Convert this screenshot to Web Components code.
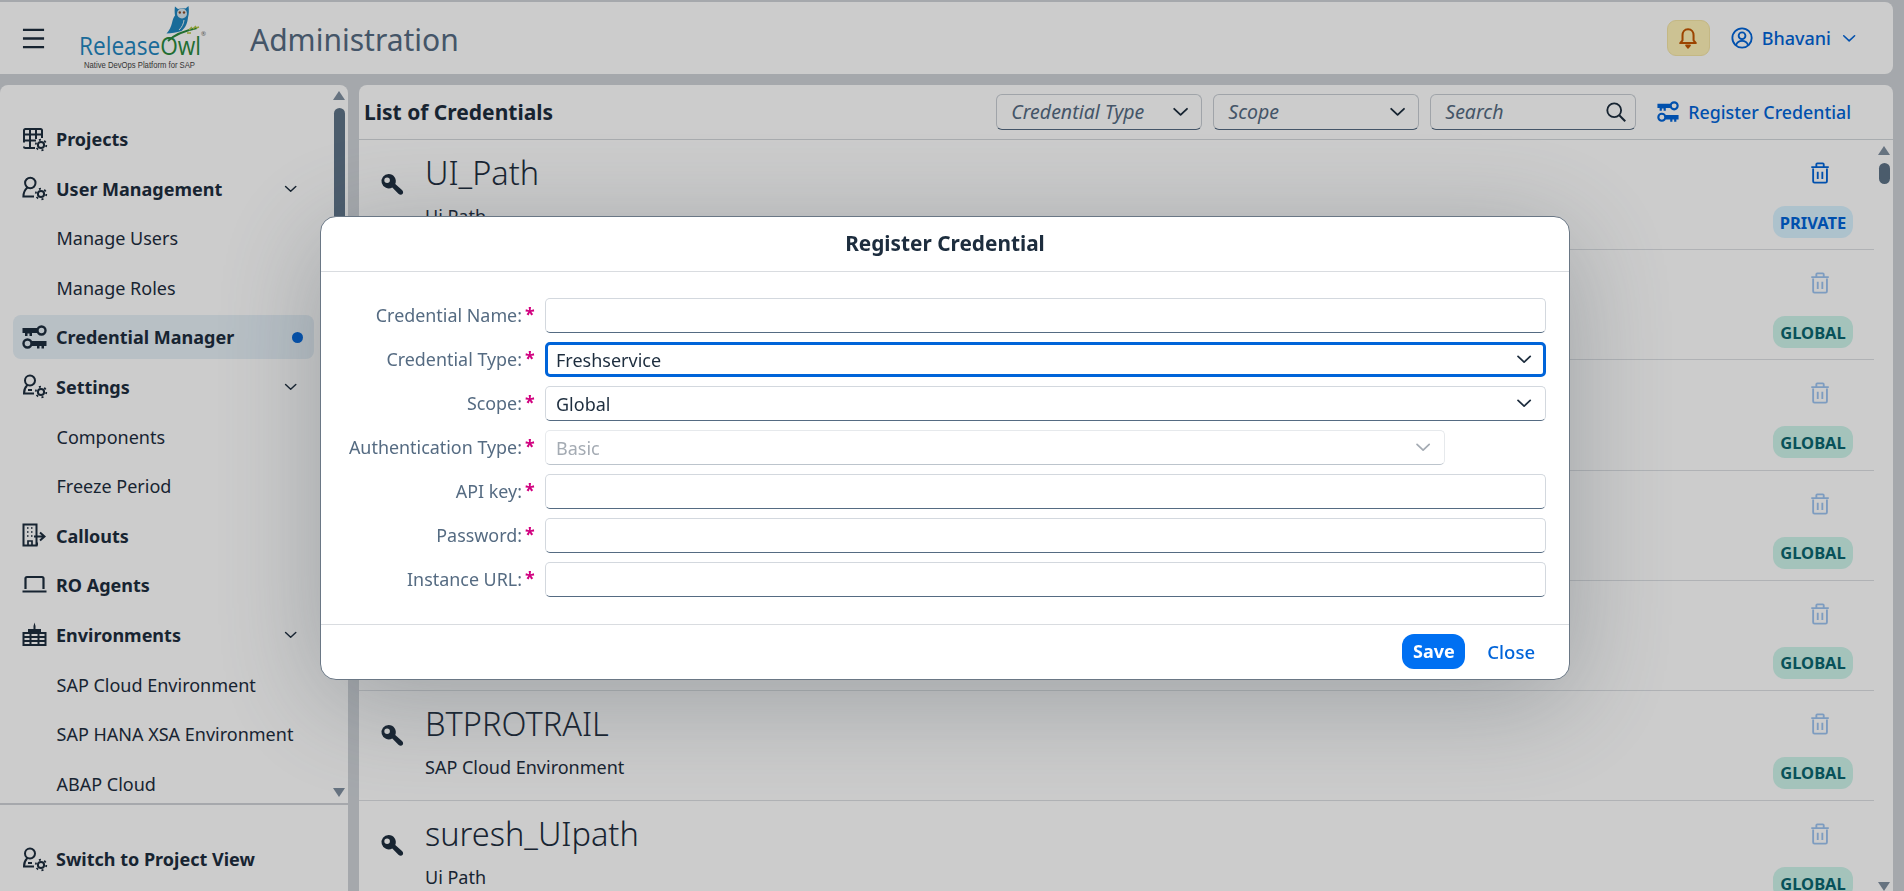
<!DOCTYPE html>
<html>
<head>
<meta charset="utf-8">
<title>Administration</title>
<style>
    html, body { margin: 0; height: 100%; overflow: hidden; }
    body { background: #cfd3d8; font-family: "Noto Sans", "Open Sans", sans-serif; color: #1d2d3e; }
</style>
</head>
<body>
<ro-shell>
    <ro-header slot="header" title="Administration" user="Bhavani"></ro-header>
    <ro-sidenav slot="nav"></ro-sidenav>
    <ro-credentials slot="main">
        <ro-cred-row name="UI_Path" type="Ui Path" scope="PRIVATE"></ro-cred-row>
        <ro-cred-row scope="GLOBAL" faded></ro-cred-row>
        <ro-cred-row scope="GLOBAL" faded></ro-cred-row>
        <ro-cred-row scope="GLOBAL" faded></ro-cred-row>
        <ro-cred-row scope="GLOBAL" faded></ro-cred-row>
        <ro-cred-row name="BTPROTRAIL" type="SAP Cloud Environment" scope="GLOBAL" faded></ro-cred-row>
        <ro-cred-row name="suresh_UIpath" type="Ui Path" scope="GLOBAL" faded></ro-cred-row>
    </ro-credentials>
</ro-shell>
<ro-dialog heading="Register Credential">
    <ro-field label="Credential Name:"></ro-field>
    <ro-field label="Credential Type:" value="Freshservice" select focused></ro-field>
    <ro-field label="Scope:" value="Global" select></ro-field>
    <ro-field label="Authentication Type:" value="Basic" select disabled></ro-field>
    <ro-field label="API key:"></ro-field>
    <ro-field label="Password:"></ro-field>
    <ro-field label="Instance URL:"></ro-field>
</ro-dialog>

<script>
const gear = (x, y) => `
    <circle cx="${x}" cy="${y}" r="3.1" fill="none" stroke="currentColor" stroke-width="2"/>
    <circle cx="${x}" cy="${y}" r="5.3" fill="none" stroke="currentColor" stroke-width="1.7" stroke-dasharray="2.1 3.45"/>`;

const ICONS = {
    projects: `<path d="M2 15.5V3.5A1.5 1.5 0 0 1 3.5 2h15A1.5 1.5 0 0 1 20 3.5V11M2 7.5h18M8 2v19M14 2v10M2 13.5h12M2 19.5A1.5 1.5 0 0 0 3.5 21H13" fill="none" stroke="currentColor" stroke-width="2"/>${gear(19, 18)}`,
    user: `<path d="M13.5 7a5.2 5.2 0 1 1-10.4 0a5.2 5.2 0 0 1 10.4 0ZM5 12c-2.3 2-3.5 5-3.6 8.5H12" fill="none" stroke="currentColor" stroke-width="2"/>${gear(19, 18)}`,
    settings: `<path d="M13 6.5a5 5 0 1 1-10 0a5 5 0 0 1 10 0ZM5 11.5c-2 2-3 4.500-3 8h10M6 16h4" fill="none" stroke="currentColor" stroke-width="2"/>${gear(19, 18)}`,
    keys: `<circle cx="19.500" cy="5.500" r="4" fill="none" stroke="currentColor" stroke-width="2.400"/><path d="M.5 3h14.500v5H10v3H7.500V8.500H5.500V11H3V8H.5Z" fill="currentColor"/><circle cx="5.500" cy="18.500" r="4" fill="none" stroke="currentColor" stroke-width="2.400"/><path d="M10 16h14.500v5H22v2.500h-2.500V21h-2v2.500H15V21h-5Z" fill="currentColor"/>`,
    callouts: `<path d="M1.500 1.500h13v21h-13ZM15 10h-1M15 19.500v3" fill="none" stroke="currentColor" stroke-width="2"/><path d="M5 5h1.500M9 5h1.500M5 9h1.500M9 9h1.500M5 13h1.500M9 13h1.500M6 22v-4h4v4" fill="none" stroke="currentColor" stroke-width="1.700"/><path d="M12 13.500h10M18 9.500l4.500 4-4.500 4" fill="none" stroke="currentColor" stroke-width="2"/>`,
    laptop: `<path d="M3.500 16V5.500A1.500 1.500 0 0 1 5 4h15a1.500 1.500 0 0 1 1.500 1.500V16M.5 18.500h24" fill="none" stroke="currentColor" stroke-width="2.200"/>`,
    env: `<path d="M1.500 11h22v12h-22ZM1.500 15h22M1.500 19h22M8.500 11v12M16.500 11v12" fill="none" stroke="currentColor" stroke-width="2"/><path d="M6 11V7h13v4ZM12.500 0.500l1 3.500v3h-2V4Z" fill="currentColor"/>`,
    chevron: `<path d="M4 8.500l8 7.500 8-7.500" fill="none" stroke="currentColor" stroke-width="2.300" stroke-linecap="round" stroke-linejoin="round"/>`,
    key: `<path fill-rule="evenodd" d="M9 1a7.500 7.500 0 0 1 6.900 10.400l7 6.300c1.500 1.400 1.500 3.200.5 4.300s-2.800 1-4.200-.4l-6.400-6.600A7.500 7.500 0 1 1 9 1Zm-1.600 3.600a2.900 2.900 0 1 0 0 5.800a2.900 2.900 0 0 0 0-5.800Z" fill="currentColor"/>`,
    trash: `<path d="M3.500 7v14A1.500 1.500 0 0 0 5 22.500h12a1.500 1.500 0 0 0 1.500-1.500V7M1.500 5.500h19M7 5V2.500A1 1 0 0 1 8 1.500h6a1 1 0 0 1 1 1V5M8.500 10.500v8M13.500 10.500v8" transform="translate(1 0)" fill="none" stroke="currentColor" stroke-width="2"/>`,
    search: `<circle cx="10" cy="10" r="7.500" fill="none" stroke="currentColor" stroke-width="2"/><path d="M15.500 15.500l6.500 6.500" fill="none" stroke="currentColor" stroke-width="2.200"/>`,
    bell: `<path d="M12 2.500c-4 0-6 3-6 6.500v5.500l-2.500 3h17l-2.500-3V9c0-3.500-2-6.500-6-6.500ZM10 20h4l-2 2.500Z" fill="none" stroke="currentColor" stroke-width="2.200" stroke-linejoin="round"/>`,
    account: `<circle cx="12" cy="12" r="10.500" fill="none" stroke="currentColor" stroke-width="2"/><circle cx="12" cy="9.500" r="3.700" fill="none" stroke="currentColor" stroke-width="2"/><path d="M5.500 19.500c1-3 3-4.500 6.500-4.500s5.500 1.500 6.500 4.500" fill="none" stroke="currentColor" stroke-width="2"/>`,
    menu: `<path d="M1 3h22M1 12h22M1 21h22" fill="none" stroke="currentColor" stroke-width="2.400"/>`
};

customElements.define('ro-icon', class extends HTMLElement {
    connectedCallback() {
        const size = this.getAttribute('size') || 25;
        this.attachShadow({mode: "open"});
        this.shadowRoot.innerHTML = `
            <style>
                :host { display: inline-flex; flex: none; width: ${size}px; height: ${size}px; }
                svg { display: block; width: 100%; height: 100%; overflow: visible; }
            </style>
            <svg viewBox="0 0 25 25">${ICONS[this.getAttribute('name')]}</svg>`;
    }
});

customElements.define('ro-shell', class extends HTMLElement {
    constructor() {
        super();
        this.attachShadow({mode: "open"});
        this.shadowRoot.innerHTML = `
            <style>
                :host {
                    display: grid;
                    grid-template-columns: 348px minmax(0, 1fr);
                    grid-template-rows: 72px minmax(0, 1fr);
                    gap: 11px;
                    height: 100vh;
                    box-sizing: border-box;
                    padding: 2px 11px 0 0;
                    overflow: hidden;
                }
                ::slotted([slot="header"]) { grid-column: 1 / 3; }
            </style>
            <slot name="header"></slot>
            <slot name="nav"></slot>
            <slot name="main"></slot>`;
    }
});

customElements.define('ro-logo', class extends HTMLElement {
    constructor() {
        super();
        this.attachShadow({mode: "open"});
        this.shadowRoot.innerHTML = `
            <style>
                :host { display: block; width: 160px; height: 72px; flex: none; }
                svg { display: block; }
                text { font-family: "Open Sans", sans-serif; }
            </style>
            <svg width="160" height="72" viewBox="60 2 160 72">
                <path d="M175 6.500l3 2.500c3-1 5-1 7.500-.5l3-2.500c.6 4 .5 8-.5 11.500c-.5 5-2 10-6.500 13.500c-5 1.800-10 2.200-15 2.500c3-3 4.500-7 5.500-10.500c.7-3.500 1.500-5.500 3-7.500c-.5-3-.5-6 0-9.500Z" fill="#1f86c0"/>
                <circle cx="182" cy="13.500" r="5" fill="#d9e6ee"/>
                <circle cx="179.800" cy="12.500" r="1.200" fill="#8a4b2a"/><circle cx="184" cy="12.500" r="1.200" fill="#8a4b2a"/>
                <path d="M184 20c-.5 4-2 7-5 10" fill="none" stroke="#e6f0f5" stroke-width="1"/>
                <path d="M168 41c6-6 15-10 29-13" fill="none" stroke="#2a8a3e" stroke-width="1.800"/>
                <path d="M189 30l3-3M193 29l3-3M187 33l4 0M196 28l3-1" stroke="#b7c840" stroke-width="1.500"/>
                <text x="79" y="55" font-size="25" textLength="122" lengthAdjust="spacingAndGlyphs"><tspan fill="#1f86c0">Release</tspan><tspan fill="#2a8a3e">Owl</tspan></text>
                <text x="201" y="36" font-size="6" fill="#666">®</text>
                <text x="84" y="67.500" font-size="8.200" fill="#444" textLength="111" lengthAdjust="spacingAndGlyphs" style='font-family:"Liberation Sans",sans-serif'>Native DevOps Platform for SAP</text>
            </svg>`;
    }
});

customElements.define('ro-header', class extends HTMLElement {
    connectedCallback() {
        this.attachShadow({mode: "open"});
        this.shadowRoot.innerHTML = `
            <style>
                :host {
                    display: flex;
                    align-items: center;
                    height: 72px;
                    background: #fff;
                    border-radius: 0 8px 8px 0;
                    padding: 0 35px 0 22px;
                    color: #1d2d3e;
                }
                .menu { margin-right: 14px; margin-top: 2px; display: flex; }
                h1 {
                    flex: 1;
                    margin: 2px 0 0 30px;
                    font-size: 30px;
                    font-weight: 400;
                    color: #556b82;
                }
                .bell {
                    display: flex;
                    align-items: center;
                    justify-content: center;
                    width: 43px;
                    height: 36px;
                    border-radius: 9px;
                    background: #fff3b8;
                    color: #c35500;
                    border: 1px solid #f5e6a6;
                    box-sizing: border-box;
                    margin-right: 21px;
                }
                .user { display: flex; align-items: center; color: #0064d9; font-size: 18px; font-weight: 500; }
                .user span { margin: 0 10px 0 8px; }
            </style>
            <div class="menu"><ro-icon name="menu" size="24"></ro-icon></div>
            <ro-logo></ro-logo>
            <h1>${this.getAttribute('title')}</h1>
            <div class="bell"><ro-icon name="bell" size="23"></ro-icon></div>
            <div class="user"><ro-icon name="account" size="23"></ro-icon><span>${this.getAttribute('user')}</span><ro-icon name="chevron" size="17"></ro-icon></div>`;
    }
});

customElements.define('ro-scrollbar', class extends HTMLElement {
    connectedCallback() {
        this.attachShadow({mode: "open"});
        const thumbTop = this.getAttribute('thumb-top');
        const thumbH = this.getAttribute('thumb-height');
        this.shadowRoot.innerHTML = `
            <style>
                :host { display: flex; flex-direction: column; align-items: center; width: 12px; flex: none; }
                .up, .down { width: 0; height: 0; border: 6px solid transparent; border-top: 0; border-bottom: 9px solid #556b82; opacity: .75; flex: none; }
                .down { border-bottom: 0; border-top: 9px solid #556b82; margin-top: auto; }
                .thumb { width: 11px; background: #556b82; border-radius: 6px; flex: none; margin-top: ${thumbTop}px; height: ${thumbH}px; opacity: .95; }
            </style>
            <div class="up"></div>
            <div class="thumb"></div>
            <div class="down"></div>`;
    }
});

customElements.define('ro-nav-item', class extends HTMLElement {
    connectedCallback() {
        this.attachShadow({mode: "open"});
        const icon = this.getAttribute('icon');
        const sub = this.hasAttribute('sub');
        const active = this.hasAttribute('active');
        this.shadowRoot.innerHTML = `
            <style>
                :host { display: block; height: 49.6px; flex: none; }
                .row {
                    display: flex;
                    align-items: center;
                    height: 44px;
                    margin: 3px 19px 0 13px;
                    padding: 0 11px 0 9px;
                    border-radius: 8px;
                    gap: 9px;
                    font-size: 18px;
                    font-weight: ${sub ? 400 : 700};
                    white-space: nowrap;
                }
                .row.active { background: #e6f0f7; }
                .row.sub { padding-left: 43.500px; }
                .label { flex: 1; }
                .dot { width: 11px; height: 11px; border-radius: 50%; background: #0064d9; }
                .more { margin-right: 4px; display: flex; }
            </style>
            <div class="row ${active ? 'active' : ''} ${sub ? 'sub' : ''}">
                ${icon ? `<ro-icon name="${icon}"></ro-icon>` : ''}
                <span class="label"><slot></slot></span>
                ${this.hasAttribute('expand') ? '<span class="more"><ro-icon name="chevron" size="16"></ro-icon></span>' : ''}
                ${active ? '<span class="dot"></span>' : ''}
            </div>`;
    }
});

customElements.define('ro-sidenav', class extends HTMLElement {
    constructor() {
        super();
        this.attachShadow({mode: "open"});
        this.shadowRoot.innerHTML = `
            <style>
                :host {
                    display: flex;
                    flex-direction: column;
                    background: #fff;
                    border-radius: 8px 8px 0 0;
                    overflow: hidden;
                    height: 100%;
                }
                .scroll { display: flex; height: 720px; flex: none; padding: 6px 3px 6px 0; box-sizing: border-box; border-bottom: 2px solid #d0d3d7; }
                .list { flex: 1; min-width: 0; display: flex; flex-direction: column; padding-top: 29px; margin-top: -6px; overflow: hidden; }
                .foot { padding-top: 29px; }
            </style>
            <div class="scroll">
                <div class="list">
                    <ro-nav-item icon="projects">Projects</ro-nav-item>
                    <ro-nav-item icon="user" expand>User Management</ro-nav-item>
                    <ro-nav-item sub>Manage Users</ro-nav-item>
                    <ro-nav-item sub>Manage Roles</ro-nav-item>
                    <ro-nav-item icon="keys" active>Credential Manager</ro-nav-item>
                    <ro-nav-item icon="settings" expand>Settings</ro-nav-item>
                    <ro-nav-item sub>Components</ro-nav-item>
                    <ro-nav-item sub>Freeze Period</ro-nav-item>
                    <ro-nav-item icon="callouts">Callouts</ro-nav-item>
                    <ro-nav-item icon="laptop">RO Agents</ro-nav-item>
                    <ro-nav-item icon="env" expand>Environments</ro-nav-item>
                    <ro-nav-item sub>SAP Cloud Environment</ro-nav-item>
                    <ro-nav-item sub>SAP HANA XSA Environment</ro-nav-item>
                    <ro-nav-item sub>ABAP Cloud</ro-nav-item>
                </div>
                <ro-scrollbar thumb-top="8" thumb-height="240"></ro-scrollbar>
            </div>
            <div class="foot"><ro-nav-item icon="settings">Switch to Project View</ro-nav-item></div>`;
    }
});

customElements.define('ro-filter', class extends HTMLElement {
    connectedCallback() {
        this.attachShadow({mode: "open"});
        const icon = this.getAttribute('icon') || 'chevron';
        const dark = icon === 'search';
        this.shadowRoot.innerHTML = `
            <style>
                :host {
                    display: flex;
                    align-items: center;
                    width: 206px;
                    height: 36px;
                    box-sizing: border-box;
                    padding: 0 ${dark ? 7 : 10}px 0 14px;
                    border: 1px solid #c8ced4;
                    border-bottom: 1.500px solid #556b82;
                    border-radius: 6px;
                    font-size: 19.500px;
                    font-style: italic;
                    color: #556b82;
                }
                span { flex: 1; white-space: nowrap; margin-top: -2px; }
            </style>
            <span>${this.getAttribute('placeholder')}</span>
            <ro-icon name="${icon}" size="${dark ? 23 : 20}" style="color:#1d2d3e"></ro-icon>`;
    }
});

customElements.define('ro-credentials', class extends HTMLElement {
    constructor() {
        super();
        this.attachShadow({mode: "open"});
        this.shadowRoot.innerHTML = `
            <style>
                :host {
                    display: flex;
                    flex-direction: column;
                    background: #fff;
                    border-radius: 8px 8px 0 0;
                    height: 100%;
                    overflow: hidden;
                }
                .bar {
                    display: flex;
                    align-items: center;
                    height: 55px;
                    flex: none;
                    box-sizing: border-box;
                    padding: 0 42px 0 5px;
                    gap: 6px;
                    border-bottom: 1.500px solid #d3d7db;
                }
                h2 { flex: 1; margin: 0; font-size: 21px; font-weight: 700; color: #1d2d3e; white-space: nowrap; }
                .filters { display: flex; gap: 11px; }
                .add { display: flex; align-items: center; gap: 9px; margin-left: 15px; color: #0064d9; font-size: 17.800px; font-weight: 500; white-space: nowrap; }
                .body { display: flex; flex: 1; min-height: 0; }
                .list { flex: 1; min-width: 0; overflow: hidden; }
                ro-scrollbar { margin: 6px 3px 0 4px; }
            </style>
            <div class="bar">
                <h2>List of Credentials</h2>
                <div class="filters">
                    <ro-filter placeholder="Credential Type"></ro-filter>
                    <ro-filter placeholder="Scope"></ro-filter>
                    <ro-filter placeholder="Search" icon="search"></ro-filter>
                </div>
                <div class="add"><ro-icon name="keys" size="22"></ro-icon><span>Register Credential</span></div>
            </div>
            <div class="body">
                <div class="list"><slot></slot></div>
                <ro-scrollbar thumb-top="8" thumb-height="21"></ro-scrollbar>
            </div>`;
    }
});

customElements.define('ro-cred-row', class extends HTMLElement {
    connectedCallback() {
        this.attachShadow({mode: "open"});
        const scope = this.getAttribute('scope');
        this.shadowRoot.innerHTML = `
            <style>
                :host {
                    display: flex;
                    height: 110.200px;
                    box-sizing: border-box;
                    padding: 0 21px 0 21px;
                    border-bottom: 1px solid #dcdfe3;
                    color: #1d2d3e;
                }
                .key { margin-top: 33px; }
                .text { flex: 1; margin-left: 21px; padding-top: 13px; min-width: 0; }
                .name { font-size: 32.500px; font-weight: 300; line-height: 40px; white-space: nowrap; }
                .type { font-size: 18px; line-height: 24px; margin-top: 11px; white-space: nowrap; }
                .side { display: flex; flex-direction: column; align-items: flex-end; width: 80px; flex: none; }
                .del { display: flex; justify-content: center; box-sizing: border-box; width: 80px; padding-left: 14px; margin-top: 22px; color: #0064d9; opacity: ${this.hasAttribute('faded') ? .38 : 1}; }
                .badge {
                    margin-top: 21px;
                    width: 80px;
                    height: 32px;
                    border-radius: 12px;
                    display: flex;
                    align-items: center;
                    justify-content: center;
                    font-size: 16.500px;
                    font-weight: 700;
                }
                .PRIVATE { background: #d9f3ff; color: #0064d9; }
                .GLOBAL { background: #cdf4ea; color: #0a6670; }
            </style>
            <ro-icon class="key" name="key" size="24"></ro-icon>
            <div class="text">
                <div class="name">${this.getAttribute('name') || ''}</div>
                <div class="type">${this.getAttribute('type') || ''}</div>
            </div>
            <div class="side">
                <div class="del"><ro-icon name="trash" size="23"></ro-icon></div>
                <div class="badge ${scope}">${scope}</div>
            </div>`;
    }
});

customElements.define('ro-field', class extends HTMLElement {
    connectedCallback() {
        this.attachShadow({mode: "open"});
        const disabled = this.hasAttribute('disabled');
        const select = this.hasAttribute('select');
        this.shadowRoot.innerHTML = `
            <style>
                :host {
                    display: grid;
                    grid-template-columns: 213px 1fr;
                    column-gap: 11px;
                    align-items: center;
                    height: 35px;
                    font-size: 18px;
                }
                label { display: flex; justify-content: flex-end; color: #556b82; white-space: nowrap; margin-top: -2px; font-size: 17.900px; }
                b { color: #d1007f; margin-left: 3px; width: 9px; font-weight: 700; transform: translateY(-1px); }
                .box {
                    display: flex;
                    align-items: center;
                    height: 35px;
                    box-sizing: border-box;
                    padding: 0 11px 0 10px;
                    border: 1px solid #d3d8de;
                    border-bottom: 1.500px solid #556b82;
                    border-radius: 5px;
                    color: #1d2d3e;
                    background: #fff;
                }
                .box span { flex: 1; }
                .focused { border: 3px solid #0064d9; padding: 0 9px 0 8px; }
                .disabled { color: #a4abb3; border-color: #e6e9ec; border-bottom: 1px solid #bcc4cc; width: 900px; }
            </style>
            <label>${this.getAttribute('label')}<b>*</b></label>
            <div class="box ${this.hasAttribute('focused') ? 'focused' : ''} ${disabled ? 'disabled' : ''}">
                <span>${this.getAttribute('value') || ''}</span>
                ${select ? `<ro-icon name="chevron" size="19" style="${disabled ? 'color:#a4abb3' : ''}"></ro-icon>` : ''}
            </div>`;
    }
});

customElements.define('ro-dialog', class extends HTMLElement {
    connectedCallback() {
        this.attachShadow({mode: "open"});
        this.shadowRoot.innerHTML = `
            <style>
                /* block layer over the whole page */
                :host { position: fixed; inset: 0; display: block; background: rgba(0, 0, 0, .2); }
                .dialog {
                    position: absolute;
                    left: 320px;
                    top: 216px;
                    width: 1250px;
                    height: 464px;
                    box-sizing: border-box;
                    display: flex;
                    flex-direction: column;
                    background: #fff;
                    border: 1px solid #6a7785;
                    border-radius: 16px;
                    box-shadow: 0 20px 110px rgba(60, 70, 80, .32);
                }
                header {
                    height: 55px;
                    flex: none;
                    box-sizing: border-box;
                    display: flex;
                    align-items: center;
                    justify-content: center;
                    font-size: 20.800px;
                    font-weight: 700;
                    color: #1d2d3e;
                    border-bottom: 1.500px solid #d9dce0;
                    padding-bottom: 2px;
                }
                .form { flex: 1; padding: 26px 23px 0 0; display: flex; flex-direction: column; gap: 9px; }
                footer {
                    height: 55px;
                    flex: none;
                    box-sizing: border-box;
                    display: flex;
                    align-items: center;
                    justify-content: flex-end;
                    gap: 22px;
                    padding: 0 34px 2px 0;
                    border-top: 1px solid #d9dce0;
                    font-size: 18px;
                }
                .save { background: #0070f2; color: #fff; font-weight: 700; height: 35px; width: 63px; border-radius: 12px; display: flex; align-items: center; justify-content: center; }
                .close { color: #0064d9; font-weight: 500; font-size: 18.500px; }
            </style>
            <div class="dialog">
                <header>${this.getAttribute('heading')}</header>
                <div class="form"><slot></slot></div>
                <footer><span class="save">Save</span><span class="close">Close</span></footer>
            </div>`;
    }
});
</script>
</body>
</html>
